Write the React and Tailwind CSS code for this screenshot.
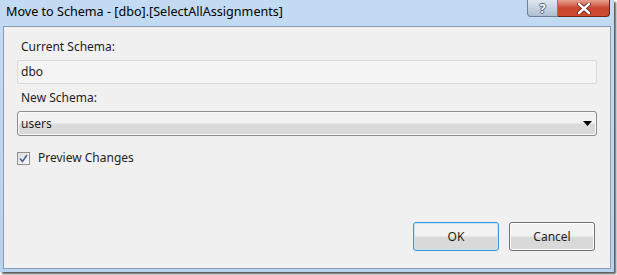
function Button({ label, isDefault }) {
  return (
    <button
      className={`w-[86px] h-[29px] rounded-[3px] border text-[12px] text-[#1e1e1e] bg-gradient-to-b from-[#f2f2f2] from-45% to-[#d9d9d9] to-55% ${
        isDefault ? "border-[#3c9bd6] shadow-[inset_0_0_0_1px_#bfe3f8]" : "border-[#707070] shadow-[inset_0_0_0_1px_#fcfcfc]"
      }`}
    >
      {label}
    </button>
  );
}

export default function App() {
  return (
    <div className="w-[617px] h-[275px] bg-white overflow-hidden font-['Noto_Sans',sans-serif]">
      <div className="w-[614px] h-[272px] flex flex-col bg-gradient-to-b from-[#c3dbf2] to-[#b8d3ee] shadow-[2px_2px_2px_#555]">
        {/* Title bar */}
        <div className="h-[26px] flex items-start justify-between pl-[6px] pr-[4px]">
          <span className="text-[12.6px] leading-[23px] text-black">Move to Schema - [dbo].[SelectAllAssignments]</span>
          <div className="flex">
            <div className="w-[31px] h-[17px] rounded-bl-[4px] border border-[#6f7f95] border-t-0 bg-gradient-to-b from-[#dde7f1] to-[#aebfd3] flex items-center justify-center text-[13px] leading-[15px] font-bold text-[#f4f6f8] [text-shadow:1px_0_0_#56667c,-1px_0_0_#56667c,0_1px_0_#56667c,0_-1px_0_#56667c]">
              ?
            </div>
            <div className="w-[52px] h-[17px] rounded-br-[4px] border border-[#6a2418] border-l-0 border-t-0 bg-gradient-to-b from-[#e6a090] via-[#c8452f] to-[#cc4a30] flex items-center justify-center">
              <svg width="14" height="11" viewBox="0 0 14 11">
                <path d="M2 1 L12 10 M12 1 L2 10" stroke="#5a1a10" strokeWidth="4" strokeLinecap="round" />
                <path d="M2 1 L12 10 M12 1 L2 10" stroke="#ffffff" strokeWidth="2.4" strokeLinecap="round" />
              </svg>
            </div>
          </div>
        </div>

        {/* Client area */}
        <div className="flex-1 mx-[3px] mb-[3px] bg-[#f0f0f0] border border-[#8b9db2] flex flex-col px-[13px] pt-[12px] pb-[17px] text-[12px] text-[#1e1e1e]">
          <div className="pl-[4px] leading-[16px]">Current Schema:</div>
          <div className="mt-[5px] h-[24px] border border-[#dadada] bg-[#f4f4f4] rounded-[2px] flex items-center pl-[3px]">dbo</div>
          <div className="mt-[6px] pl-[4px] leading-[16px]">New Schema:</div>
          <div className="mt-[5px] h-[25px] border border-[#8c8c8c] rounded-[3px] bg-gradient-to-b from-[#f2f2f2] from-45% to-[#dadada] to-55% shadow-[inset_0_0_0_1px_#f9f9f9] flex items-center justify-between pl-[3px] pr-[4px]">
            <span>users</span>
            <svg width="9" height="5" viewBox="0 0 9 5">
              <path d="M0 0 H9 L4.5 5 Z" fill="#000" />
            </svg>
          </div>
          <label className="mt-[13px] flex items-center gap-[8px]">
            <span className="w-[13px] h-[13px] border border-[#8e8f8f] bg-gradient-to-br from-[#dcdcdc] to-[#fbfbfb] flex items-center justify-center">
              <svg width="9" height="9" viewBox="0 0 9 9">
                <path d="M1 4.5 L3.5 7.5 L8 1" stroke="#4a5f97" strokeWidth="1.6" fill="none" />
              </svg>
            </span>
            <span>Preview Changes</span>
          </label>
          <div className="mt-auto flex justify-end gap-[10px] pr-[2px]">
            <Button label="OK" isDefault />
            <Button label="Cancel" />
          </div>
        </div>
      </div>
    </div>
  );
}
